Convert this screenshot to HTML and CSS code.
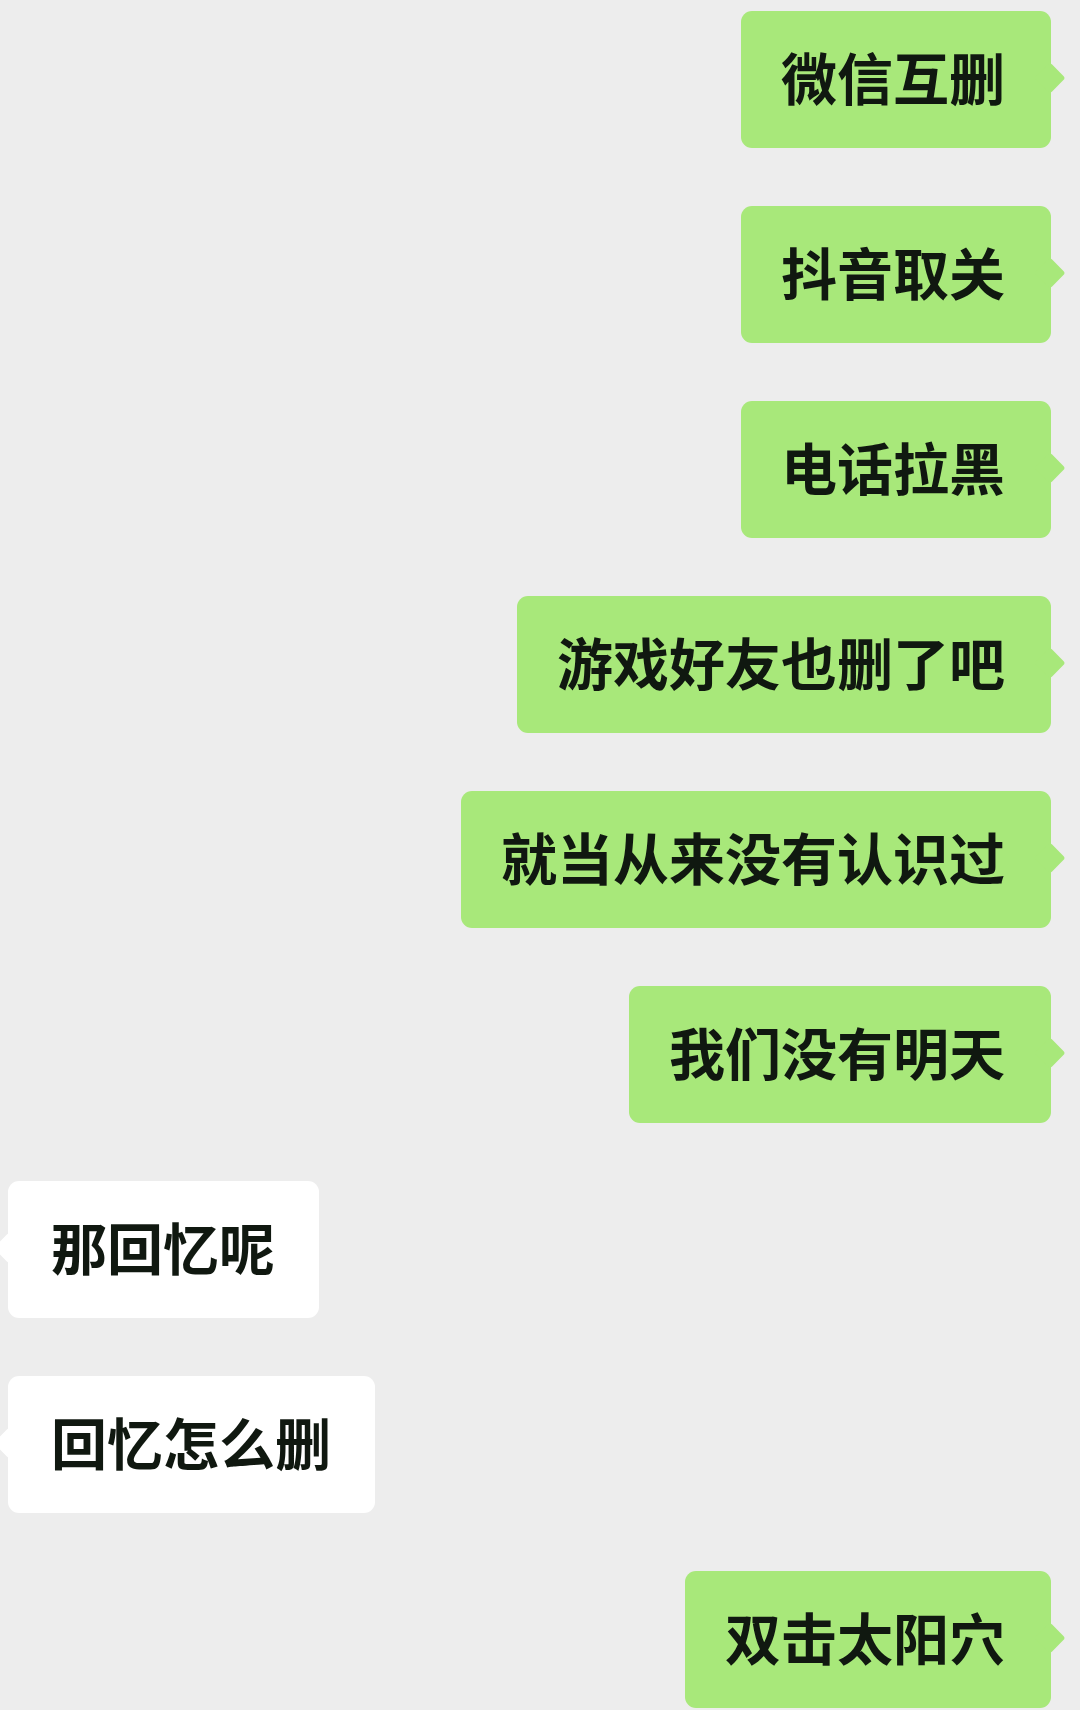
FILE: index.html
```html
<!DOCTYPE html>
<html lang="zh-CN">
<head>
<meta charset="utf-8">
<title>聊天</title>
<link rel="stylesheet" href="styles.css">
</head>
<body>
<div class="chat">
  <div class="row me"><div class="bubble">微信互删</div></div>
  <div class="row me"><div class="bubble">抖音取关</div></div>
  <div class="row me"><div class="bubble">电话拉黑</div></div>
  <div class="row me"><div class="bubble">游戏好友也删了吧</div></div>
  <div class="row me"><div class="bubble">就当从来没有认识过</div></div>
  <div class="row me"><div class="bubble">我们没有明天</div></div>
  <div class="row other"><div class="bubble">那回忆呢</div></div>
  <div class="row other"><div class="bubble">回忆怎么删</div></div>
  <div class="row me"><div class="bubble">双击太阳穴</div></div>
</div>
</body>
</html>
```
FILE: styles.css
```css
html, body {
  margin: 0;
  padding: 0;
  background: #ededed;
}
.chat {
  width: 1080px;
  height: 1710px;
  overflow: hidden;
  display: flex;
  flex-direction: column;
  gap: 58px;
  padding-top: 11px;
  box-sizing: border-box;
}
.row {
  display: flex;
}
.row.me {
  justify-content: flex-end;
  padding-right: 29px;
}
.row.other {
  justify-content: flex-start;
  padding-left: 8px;
}
.bubble {
  position: relative;
  height: 129px;
  line-height: 129px;
  padding-bottom: 8px;
  border-radius: 11px;
  font-family: "Noto Sans CJK SC", "Noto Sans", sans-serif;
  font-size: 56px;
  font-weight: 700;
  color: #101810;
  white-space: nowrap;
}
.me .bubble {
  background: #a8e87a;
  padding-left: 40px;
  padding-right: 46px;
}
.other .bubble {
  background: #ffffff;
  padding-left: 43px;
  padding-right: 44px;
}
.bubble::after {
  content: "";
  position: absolute;
  top: 68px;
  width: 22px;
  height: 22px;
  border-radius: 3px;
  margin-top: -12px;
  transform: rotate(45deg);
}
.me .bubble::after {
  right: -10px;
  background: #a8e87a;
}
.other .bubble::after {
  left: -10px;
  background: #ffffff;
}
```
